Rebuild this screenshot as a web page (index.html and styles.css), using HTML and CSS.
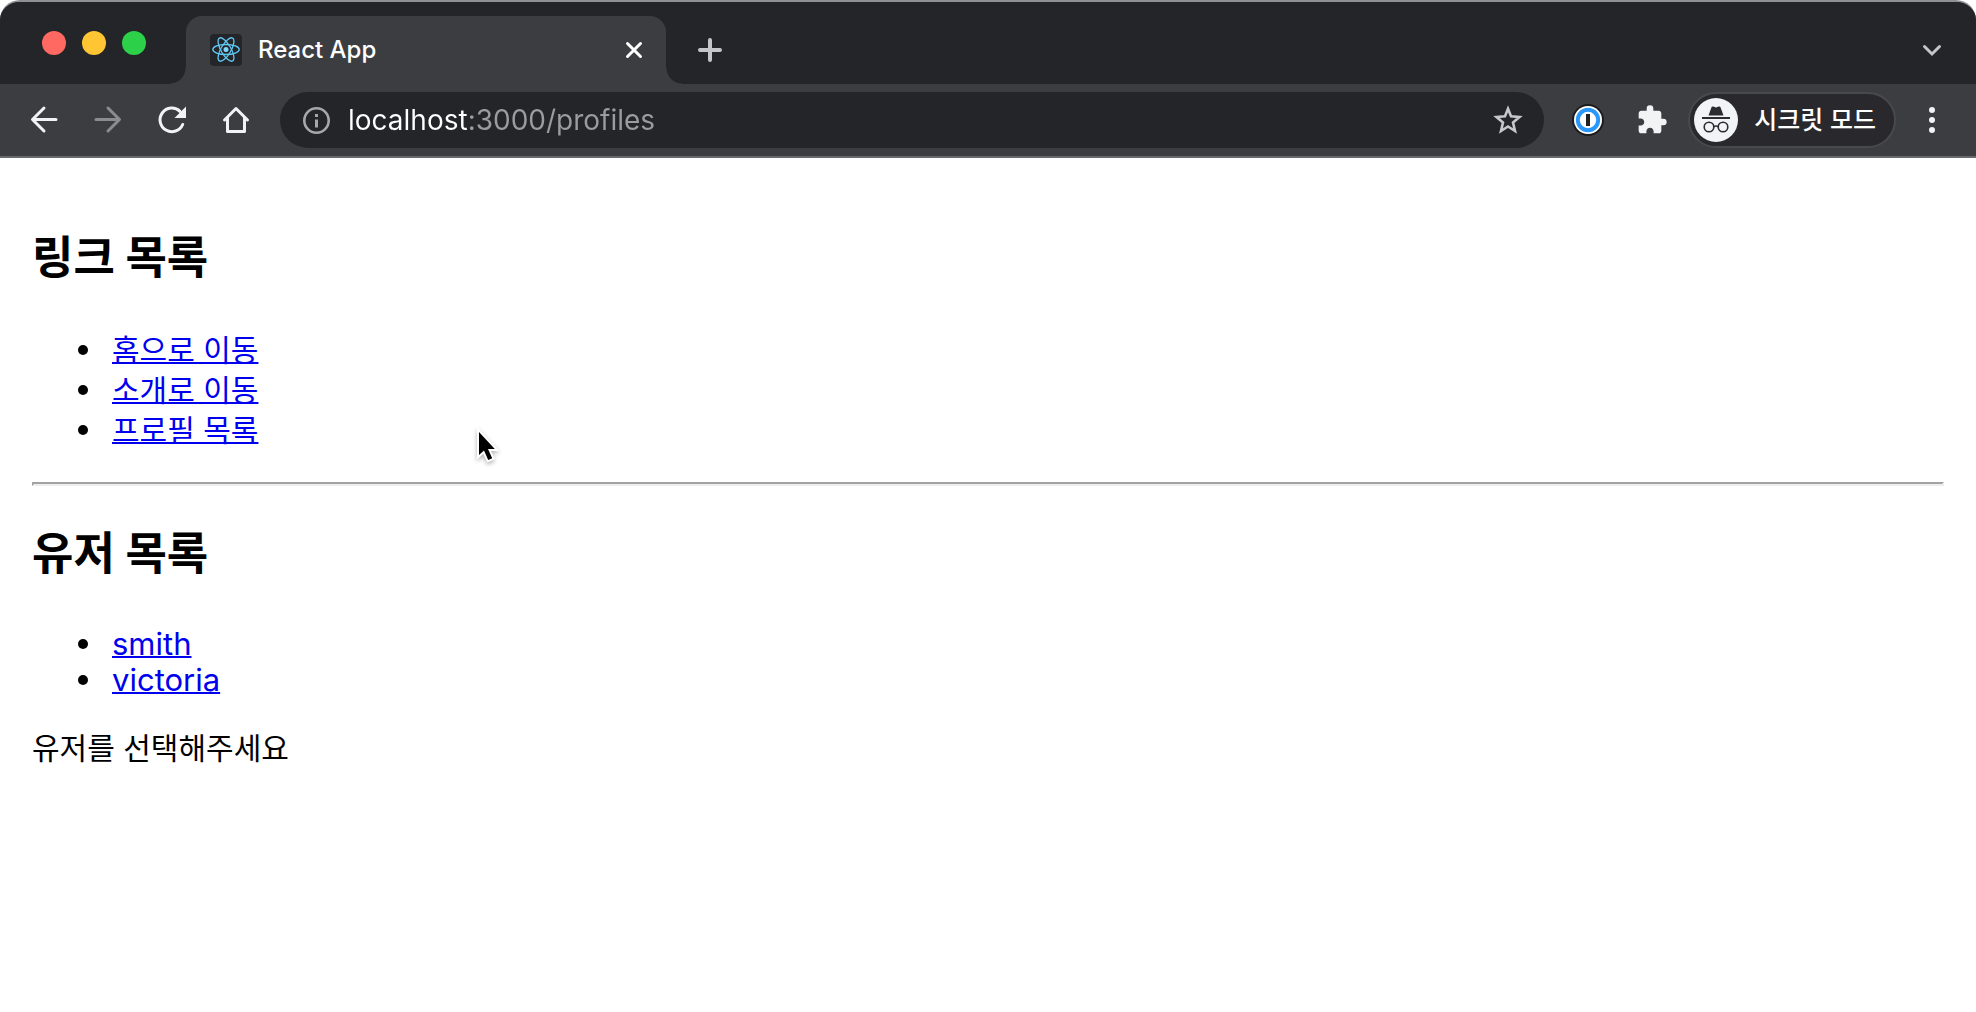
FILE: index.html
```html
<!DOCTYPE html>
<html lang="ko">
<head>
    <meta charset="UTF-8">
    <meta name="viewport" content="width=device-width, initial-scale=1.0">
    <title>React App</title>
    <link rel="stylesheet" href="styles.css">
</head>
<body>
    <header class="browser">
        <div class="tab-strip">
            <div class="window-buttons">
                <button class="light red" aria-label="닫기"></button>
                <button class="light yellow" aria-label="최소화"></button>
                <button class="light green" aria-label="최대화"></button>
            </div>
            <div class="tab">
                <svg class="favicon" width="32" height="32" viewBox="0 0 32 32">
                    <rect width="32" height="32" rx="4" fill="#242528"/>
                    <g fill="none" stroke="#61c8f4" stroke-width="1.3">
                        <ellipse cx="16" cy="15.5" rx="13.2" ry="5"/>
                        <ellipse cx="16" cy="15.5" rx="13.2" ry="5" transform="rotate(60 16 15.5)"/>
                        <ellipse cx="16" cy="15.5" rx="13.2" ry="5" transform="rotate(120 16 15.5)"/>
                    </g>
                    <circle cx="16" cy="15.5" r="2.5" fill="#7fd6fb"/>
                </svg>
                <span class="tab-title">React App</span>
                <button class="tab-close" aria-label="탭 닫기">
                    <svg width="32" height="32" viewBox="0 0 32 32"><path d="M9.500 9.500l13 13M22.500 9.500l-13 13" stroke="#fff" stroke-width="3" stroke-linecap="round"/></svg>
                </button>
            </div>
            <button class="icon-button new-tab" aria-label="새 탭">
                <svg width="32" height="32" viewBox="0 0 32 32"><path d="M16 6v20M6 16h20" stroke="#c6c6c8" stroke-width="4" stroke-linecap="round"/></svg>
            </button>
            <button class="icon-button tab-search" aria-label="탭 검색">
                <svg width="32" height="32" viewBox="0 0 32 32"><path d="M8.500 12.500l7.500 7.500 7.500-7.500" fill="none" stroke="#c6c6c8" stroke-width="3" stroke-linecap="round"/></svg>
            </button>
        </div>
        <div class="toolbar">
            <nav class="nav-buttons">
                <button class="icon-button" aria-label="뒤로">
                    <svg width="32" height="32" viewBox="0 0 32 32"><path d="M28 15.500H5M16 4L4.500 15.500 16 27" fill="none" stroke="#f1f3f4" stroke-width="3" stroke-linecap="round" stroke-linejoin="round"/></svg>
                </button>
                <button class="icon-button" aria-label="앞으로">
                    <svg width="32" height="32" viewBox="0 0 32 32"><path d="M4 15.500h23M16 4l11.500 11.500L16 27" fill="none" stroke="#8b8c8f" stroke-width="3" stroke-linecap="round" stroke-linejoin="round"/></svg>
                </button>
                <button class="icon-button" aria-label="새로고침">
                    <svg width="32" height="32" viewBox="0 0 32 32">
                        <path d="M26.700 20.500A11.800 11.800 0 1 1 24 7.300" fill="none" stroke="#f1f3f4" stroke-width="3" stroke-linecap="round"/>
                        <path d="M30 2.500V14H18.500z" fill="#f1f3f4"/>
                    </svg>
                </button>
                <button class="icon-button" aria-label="홈">
                    <svg width="32" height="32" viewBox="0 0 32 32"><path d="M4.500 16L16 4.500 27.500 16M7.500 14v13.500h17V14" fill="none" stroke="#f1f3f4" stroke-width="3" stroke-linecap="round" stroke-linejoin="round"/></svg>
                </button>
            </nav>
            <div class="address-bar">
                <svg width="32" height="32" viewBox="0 0 32 32">
                    <circle cx="16.500" cy="16.500" r="12.200" fill="none" stroke="#a6a7a9" stroke-width="2.600"/>
                    <path d="M16.500 10v3M16.500 15.500v8" stroke="#a6a7a9" stroke-width="3"/>
                </svg>
                <input class="address" type="text" value="localhost:3000/profiles" aria-label="주소창">
                <button class="bookmark" aria-label="북마크">
                    <svg width="32" height="32" viewBox="0 0 32 32"><path d="M16 4.800l3 7.500 8.500.700-6.500 5.500 2 8.500-7-4.500-7 4.500 2-8.500-6.500-5.500 8.500-.7z" fill="none" stroke="#c6c7c9" stroke-width="2.600"/></svg>
                </button>
            </div>
            <div class="extensions">
                <button class="icon-button" aria-label="1Password">
                    <svg width="32" height="32" viewBox="0 0 32 32">
                        <circle cx="16" cy="16" r="16" fill="#1c1c1e"/>
                        <circle cx="16" cy="16" r="14" fill="#fff"/>
                        <circle cx="16" cy="16" r="10.200" fill="#fff" stroke="#2a98fb" stroke-width="4"/>
                        <rect x="14" y="10" width="4" height="12" fill="#222"/>
                    </svg>
                </button>
                <button class="icon-button" aria-label="확장 프로그램">
                    <svg width="32" height="32" viewBox="0 0 24 24"><path d="M20.500 11H19V7c0-1.100-.9-2-2-2h-4V3.500a2.500 2.500 0 0 0-5 0V5H4c-1.100 0-1.990.9-1.990 2v3.800H3.500c1.490 0 2.700 1.210 2.700 2.700s-1.210 2.700-2.700 2.700H2V20c0 1.100.9 2 2 2h3.800v-1.500c0-1.490 1.210-2.700 2.700-2.700s2.700 1.210 2.700 2.700V22H17c1.100 0 2-.9 2-2v-4h1.500a2.500 2.500 0 0 0 0-5z" fill="#f1f3f4"/></svg>
                </button>
            </div>
            <button class="incognito">
                <svg width="44" height="44" viewBox="0 0 44 44">
                    <circle cx="22" cy="22" r="22" fill="#f1f3f6"/>
                    <path d="M14.500 17.500l3-8.200c.3-.8 1-1 1.700-.700l2.800 1 2.800-1c.7-.3 1.400-.1 1.700.7l3 8.200z" fill="#2b2c30"/>
                    <path d="M8 20h28" stroke="#2b2c30" stroke-width="1.800"/>
                    <g fill="none" stroke="#2b2c30" stroke-width="1.600">
                        <circle cx="15" cy="29" r="4.800"/>
                        <circle cx="29" cy="29" r="4.800"/>
                        <path d="M19.500 29q2.500-2 5 0"/>
                    </g>
                </svg>
                <span>시크릿 모드</span>
            </button>
            <button class="icon-button" aria-label="메뉴">
                <svg width="32" height="32" viewBox="0 0 32 32" fill="#f1f3f4"><circle cx="16" cy="6" r="3"/><circle cx="16" cy="16" r="3"/><circle cx="16" cy="26" r="3"/></svg>
            </button>
        </div>
    </header>

    <main class="page">
        <h2>링크 목록</h2>
        <ul class="links">
            <li><a href="/">홈으로 이동</a></li>
            <li><a href="/about">소개로 이동</a></li>
            <li><a href="/profiles">프로필 목록</a></li>
        </ul>
        <hr>
        <h2>유저 목록</h2>
        <ul class="users">
            <li><a href="/profiles/smith">smith</a></li>
            <li><a href="/profiles/victoria">victoria</a></li>
        </ul>
        <p>유저를 선택해주세요</p>
    </main>

    <svg class="cursor" width="28" height="36" viewBox="0 0 28 36">
        <path d="M5 4v23l5-4.500 4.200 9.500 4-1.700-4.200-9.300h6.800z" fill="#000" stroke="#fff" stroke-width="4" paint-order="stroke"/>
    </svg>
</body>
</html>
```
FILE: styles.css
```css
* {
    box-sizing: border-box;
}
body {
    margin: 0;
    background-color: #fff;
    color: #000;
    font-family: Inter, "Noto Sans CJK KR", sans-serif;
    font-size: 30px;
}
button {
    display: flex;
    align-items: center;
    justify-content: center;
    padding: 0;
    border: none;
    background: none;
    color: #fff;
    font-family: inherit;
}
svg {
    display: block;
    flex-shrink: 0;
}

/* Browser window */
.browser {
    border-top: 2px solid #8e9093;
    border-bottom: 2px solid #68696c;
    border-radius: 20px 20px 0 0;
    background-color: #3c3d41;
    overflow: hidden;
}
.tab-strip {
    display: flex;
    align-items: center;
    height: 82px;
    padding: 14px 20px 0 42px;
    background-color: #242529;
}
.window-buttons {
    display: flex;
    gap: 16px;
    margin: 0 40px 14px 0;
}
.light {
    width: 24px;
    height: 24px;
    border-radius: 50%;
}
.red {
    background-color: #ff6961;
}
.yellow {
    background-color: #ffc533;
}
.green {
    background-color: #2dd149;
}
.tab {
    position: relative;
    display: flex;
    align-items: center;
    width: 480px;
    height: 68px;
    padding: 0 16px 0 24px;
    border-radius: 16px 16px 0 0;
    background-color: #3c3d41;
}
/* curved feet of the active tab */
.tab::before,
.tab::after {
    content: "";
    position: absolute;
    bottom: 0;
    width: 16px;
    height: 16px;
}
.tab::before {
    right: 100%;
    background: radial-gradient(circle at 0 0, transparent 15px, #3c3d41 16px);
}
.tab::after {
    left: 100%;
    background: radial-gradient(circle at 100% 0, transparent 15px, #3c3d41 16px);
}
.tab-title {
    flex: 1;
    margin-left: 16px;
    color: #fff;
    font-size: 24px;
    font-weight: 500;
    line-height: 32px;
}
.icon-button {
    width: 48px;
    height: 48px;
}
.new-tab {
    margin-left: 20px;
}
.tab-search {
    margin-left: auto;
}
.toolbar {
    display: flex;
    align-items: center;
    height: 72px;
    padding: 0 20px;
}
.nav-buttons,
.extensions {
    display: flex;
    gap: 16px;
}
.address-bar {
    display: flex;
    align-items: center;
    flex: 1;
    height: 56px;
    margin: 0 20px;
    padding: 0 20px;
    border-radius: 28px;
    background-color: #242529;
}
.address {
    flex: 1;
    min-width: 0;
    margin-left: 16px;
    padding: 0;
    border: none;
    outline: none;
    /* host is white, port and path are grey */
    background: linear-gradient(to right, #fff 121px, #9b9c9e 121px);
    -webkit-background-clip: text;
    background-clip: text;
    color: #9b9c9e;
    -webkit-text-fill-color: transparent;
    font-family: inherit;
    font-size: 28px;
    line-height: 40px;
}
.incognito {
    gap: 16px;
    height: 56px;
    margin: 0 12px;
    padding: 0 18px 0 4px;
    border: 2px solid #48494c;
    border-radius: 28px;
    background-color: #29292d;
    font-size: 25px;
    font-weight: 500;
    line-height: 32px;
}

/* Page */
.page {
    padding: 32px;
}
h2 {
    margin: 40px 0 44px;
    font-size: 45px;
    line-height: 56px;
}
ul {
    margin: 0 0 32px;
    padding-left: 46px;
    list-style: none;
}
li {
    display: flex;
    align-items: center;
    gap: 24px;
}
li::before {
    content: "";
    width: 10px;
    height: 10px;
    border-radius: 50%;
    background-color: #000;
}
.links {
    line-height: 40px;
}
.users {
    font-size: 31px;
    line-height: 36px;
}
a {
    color: #0000ee;
    text-decoration: underline;
    text-decoration-thickness: 2px;
}
hr {
    margin: 0;
    border-width: 2px;
    border-style: solid;
    border-color: #a2a2a2 #eee #eee #a2a2a2;
}
p {
    margin: 0;
    line-height: 36px;
}
.cursor {
    position: absolute;
    top: 428px;
    left: 474px;
    filter: drop-shadow(0 2px 2px rgba(0, 0, 0, 0.3));
}
```
